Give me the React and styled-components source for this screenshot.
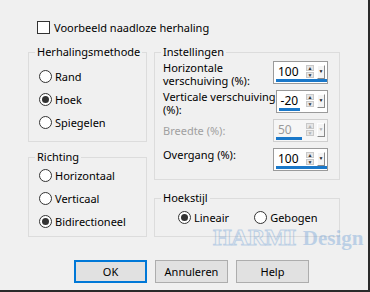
import styled, { createGlobalStyle } from "styled-components"

const GlobalStyle = createGlobalStyle`
  body { margin: 0; background: #f0f0f0; }
`

export default function App() {
  return (
    <>
      <GlobalStyle />
      <Window>
        <CheckRow>
          <CheckBox />
          <span>Voorbeeld naadloze herhaling</span>
        </CheckRow>
        <Columns>
          <Column>
            <Group $h={97}>
              <Legend>Herhalingsmethode</Legend>
              <RadioList $top={6}>
                <RadioRow><Radio /> Rand</RadioRow>
                <RadioRow><Radio $on /> Hoek</RadioRow>
                <RadioRow><Radio /> Spiegelen</RadioRow>
              </RadioList>
            </Group>
            <Group $h={87}>
              <Legend>Richting</Legend>
              <RadioList $top={0}>
                <RadioRow><Radio /> Horizontaal</RadioRow>
                <RadioRow><Radio /> Verticaal</RadioRow>
                <RadioRow><Radio $on /> Bidirectioneel</RadioRow>
              </RadioList>
            </Group>
          </Column>
          <Column $gap={11}>
            <Group $h={135}>
              <Legend>Instellingen</Legend>
              <Settings>
                <SettingRow>
                  <Label>Horizontale<br />verschuiving (%):</Label>
                  <Spin value="100" bar={51} />
                </SettingRow>
                <SettingRow>
                  <Label>Verticale verschuiving<br />(%):</Label>
                  <Spin value="-20" bar={21} />
                </SettingRow>
                <SettingRow $center>
                  <Label $disabled>Breedte (%):</Label>
                  <Spin value="50" bar={26} disabled />
                </SettingRow>
                <SettingRow>
                  <Label>Overgang (%):</Label>
                  <Spin value="100" bar={51} />
                </SettingRow>
              </Settings>
            </Group>
            <Group $h={46}>
              <Legend>Hoekstijl</Legend>
              <StyleRow>
                <RadioRow><Radio $on /> Lineair</RadioRow>
                <RadioRow><Radio /> Gebogen</RadioRow>
              </StyleRow>
            </Group>
          </Column>
        </Columns>
        <Buttons>
          <Button $default>OK</Button>
          <Button>Annuleren</Button>
          <Button>Help</Button>
        </Buttons>
        <Watermark>
          <Harmi>HARMI</Harmi><Design>Design</Design>
        </Watermark>
      </Window>
    </>
  )
}

function Spin({ value, bar, disabled }) {
  return (
    <SpinBox $disabled={disabled}>
      <SpinValue>{value}</SpinValue>
      <Arrows $disabled={disabled}>
        <ArrowBtn>▲</ArrowBtn>
        <ArrowBtn>▼</ArrowBtn>
      </Arrows>
      <DropBtn $disabled={disabled}>▼</DropBtn>
      <Bar $w={bar} />
    </SpinBox>
  )
}

const Window = styled.div`
  position: relative;
  width: 368px;
  height: 290px;
  background: #f0f0f0;
  border-right: 2px solid #2a2a2a;
  border-bottom: 2px solid #2a2a2a;
  font-family: "Noto Sans", sans-serif;
  font-size: 11px;
  color: #000;
  display: flex;
  flex-direction: column;
  overflow: hidden;
`
const CheckRow = styled.div`
  display: flex;
  align-items: center;
  gap: 4px;
  height: 16px;
  padding: 19px 0 0 37px;
`
const CheckBox = styled.span`
  width: 11px;
  height: 11px;
  border: 1px solid #333;
  background: #fff;
`
const Columns = styled.div`
  display: grid;
  grid-template-columns: 119px 186px;
  column-gap: 7px;
  padding-left: 28px;
  margin-top: 10px;
`
const Column = styled.div`
  display: flex;
  flex-direction: column;
  gap: ${p => p.$gap ?? 8}px;
`
const Group = styled.fieldset`
  box-sizing: border-box;
  height: ${p => p.$h}px;
  margin: 0;
  padding: 0 6px 0 6px;
  border: 1px solid #dcdcdc;
  min-width: 0;
`
const Legend = styled.legend`
  padding: 0 2px;
  margin-left: 0;
  line-height: 14px;
  color: #000;
`
const RadioList = styled.div`
  display: flex;
  flex-direction: column;
  padding-top: ${p => p.$top}px;
  padding-left: 4px;
`
const RadioRow = styled.label`
  display: flex;
  align-items: center;
  gap: 3px;
  height: 23px;
`
const Radio = styled.span`
  box-sizing: border-box;
  width: 13px;
  height: 13px;
  border-radius: 50%;
  border: 1px solid #333;
  background: #fff;
  display: flex;
  align-items: center;
  justify-content: center;
  &::after {
    content: "";
    width: 7px;
    height: 7px;
    border-radius: 50%;
    background: ${p => (p.$on ? "#333" : "transparent")};
  }
`
const Settings = styled.div`
  display: flex;
  flex-direction: column;
  gap: 6px;
  padding: 2px 0 0 2px;
`
const SettingRow = styled.div`
  display: flex;
  justify-content: space-between;
  align-items: ${p => (p.$center ? "center" : "flex-start")};
  height: 23px;
  padding-right: 5px;
`
const Label = styled.span`
  white-space: nowrap;
  line-height: 12.5px;
  padding-top: 1px;
  color: ${p => (p.$disabled ? "#a0a0a0" : "#000")};
`
const SpinBox = styled.div`
  position: relative;
  box-sizing: border-box;
  width: 55px;
  height: 23px;
  display: flex;
  align-items: center;
  border: 1px solid ${p => (p.$disabled ? "#cfcfcf" : "#9a9a9a")};
  background: ${p => (p.$disabled ? "#f6f6f6" : "#fff")};
  color: ${p => (p.$disabled ? "#9a9a9a" : "#000")};
  padding: 0 2px 2px 4px;
  font-size: 12px;
`
const SpinValue = styled.span`
  flex: 1;
`
const Arrows = styled.div`
  display: flex;
  flex-direction: column;
  gap: 1px;
  margin-right: 3px;
  color: ${p => (p.$disabled ? "#b0b0b0" : "#333")};
`
const ArrowBtn = styled.span`
  box-sizing: border-box;
  width: 8px;
  height: 6px;
  background: #e6e6e6;
  border: 1px solid #c8c8c8;
  font-size: 5px;
  line-height: 4px;
  text-align: center;
  overflow: hidden;
`
const DropBtn = styled.span`
  box-sizing: border-box;
  width: 8px;
  height: 14px;
  background: #f4f4f4;
  border-top: 1px solid #fff;
  border-left: 1px solid #fff;
  border-right: 1px solid #8a8a8a;
  border-bottom: 1px solid #8a8a8a;
  font-size: 5px;
  line-height: 10px;
  text-align: center;
  color: ${p => (p.$disabled ? "#b0b0b0" : "#222")};
`
const Bar = styled.span`
  position: absolute;
  left: 2px;
  bottom: 1px;
  height: 3px;
  width: ${p => p.$w}px;
  background: #1a78c9;
`
const StyleRow = styled.div`
  display: flex;
  gap: 25px;
  padding: 1px 0 0 17px;
`
const Buttons = styled.div`
  display: flex;
  gap: 8px;
  padding-left: 74px;
  margin-top: 23px;
`
const Button = styled.button`
  box-sizing: border-box;
  width: 73px;
  height: 23px;
  font-family: "Noto Sans", sans-serif;
  font-size: 11px;
  color: #000;
  background: #e1e1e1;
  border: 1px solid ${p => (p.$default ? "#0078d7" : "#adadad")};
  box-shadow: ${p => (p.$default ? "inset 0 0 0 1px #0078d7" : "none")};
  padding: 0;
`
const Watermark = styled.div`
  position: absolute;
  left: 213px;
  top: 224px;
  display: flex;
  align-items: baseline;
  gap: 7px;
  white-space: nowrap;
  opacity: 0.4;
  color: #6e9fd6;
  pointer-events: none;
`
const Harmi = styled.span`
  font-family: "Liberation Serif", serif;
  font-size: 24px;
  font-weight: bold;
  letter-spacing: -0.5px;
  color: transparent;
  -webkit-text-stroke: 1px #6e9fd6;
`
const Design = styled.span`
  font-family: "Liberation Serif", serif;
  font-size: 21px;
  font-weight: bold;
`
